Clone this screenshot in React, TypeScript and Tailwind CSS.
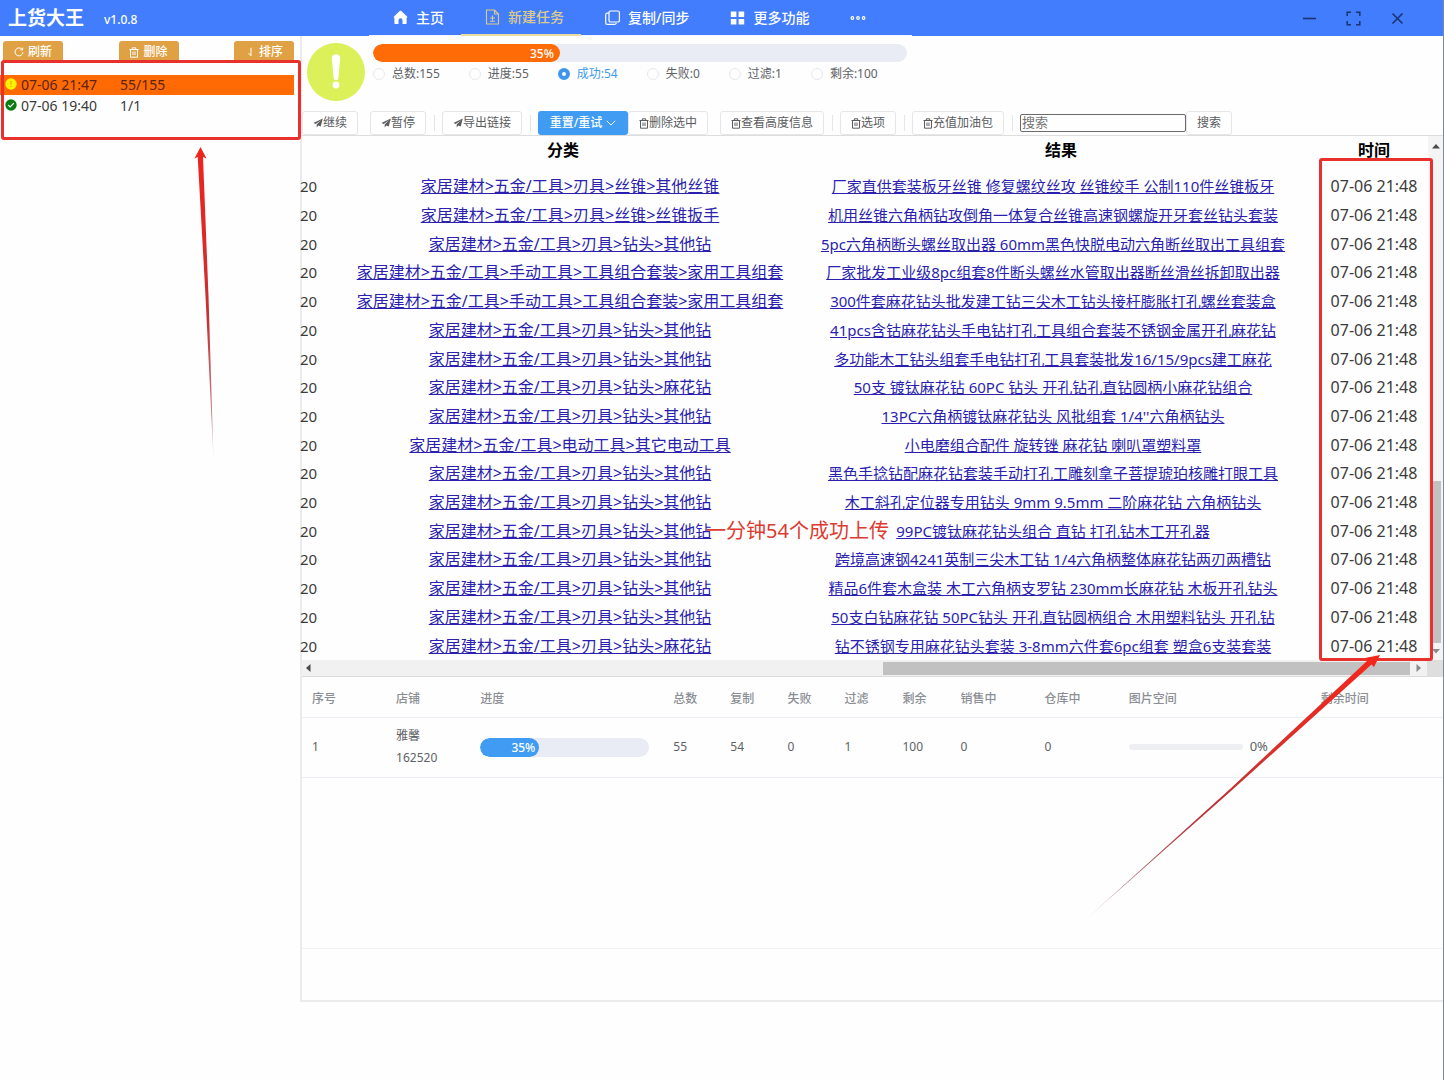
import React from "react";

const DRILL = "家居建材>五金/工具>刃具>钻头>其他钻";
const TWIST = "家居建材>五金/工具>刃具>钻头>麻花钻";
const KIT = "家居建材>五金/工具>手动工具>工具组合套装>家用工具组套";

const results: [string, string][] = [
  ["家居建材>五金/工具>刃具>丝锥>其他丝锥", "厂家直供套装板牙丝锥 修复螺纹丝攻 丝锥绞手 公制110件丝锥板牙"],
  ["家居建材>五金/工具>刃具>丝锥>丝锥扳手", "机用丝锥六角柄钻攻倒角一体复合丝锥高速钢螺旋开牙套丝钻头套装"],
  [DRILL, "5pc六角柄断头螺丝取出器 60mm黑色快脱电动六角断丝取出工具组套"],
  [KIT, "厂家批发工业级8pc组套8件断头螺丝水管取出器断丝滑丝拆卸取出器"],
  [KIT, "300件套麻花钻头批发建工钻三尖木工钻头接杆膨胀打孔螺丝套装盒"],
  [DRILL, "41pcs含钴麻花钻头手电钻打孔工具组合套装不锈钢金属开孔麻花钻"],
  [DRILL, "多功能木工钻头组套手电钻打孔工具套装批发16/15/9pcs建工麻花"],
  [TWIST, "50支 镀钛麻花钻 60PC 钻头 开孔钻孔直钻圆柄小麻花钻组合"],
  [DRILL, "13PC六角柄镀钛麻花钻头 风批组套 1/4''六角柄钻头"],
  ["家居建材>五金/工具>电动工具>其它电动工具", "小电磨组合配件 旋转锉 麻花钻 喇叭罩塑料罩"],
  [DRILL, "黑色手捻钻配麻花钻套装手动打孔工雕刻拿子菩提琥珀核雕打眼工具"],
  [DRILL, "木工斜孔定位器专用钻头 9mm 9.5mm 二阶麻花钻 六角柄钻头"],
  [DRILL, "99PC镀钛麻花钻头组合 直钻 打孔钻木工开孔器"],
  [DRILL, "跨境高速钢4241英制三尖木工钻 1/4六角柄整体麻花钻两刃两槽钻"],
  [DRILL, "精品6件套木盒装 木工六角柄支罗钻 230mm长麻花钻 木板开孔钻头"],
  [DRILL, "50支白钻麻花钻 50PC钻头 开孔直钻圆柄组合 木用塑料钻头 开孔钻"],
  [TWIST, "钻不锈钢专用麻花钻头套装 3-8mm六件套6pc组套 塑盒6支装套装"],
];

const filters = ["总数:155", "进度:55", "成功:54", "失败:0", "过滤:1", "剩余:100"];

const HomeIcon = () => (
  <svg width="15" height="15" viewBox="0 0 15 15" fill="currentColor" aria-hidden="true">
    <path d="M7.5 0.8c.3 0 .6.1.8.3L14 6.500c.6.6.300 1.300-.400 1.300V13c0 .600-.400 1-1 1H9.500V10.200a2 2 0 0 0-4 0V14H2.400c-.600 0-1-.400-1-1V7.800C.700 7.800.400 7.100 1 6.500L6.700 1.100c.2-.2.5-.3.8-.3z" />
  </svg>
);
const DocIcon = () => (
  <svg width="15" height="16" viewBox="0 0 15 16" fill="none" stroke="currentColor" strokeWidth="1.1" aria-hidden="true">
    <path d="M1.500 1h8l4 4v10h-12zM9.500 1v4h4M7.500 6.500v5M5 9h5M5 12.300h5" />
  </svg>
);
const CopyIcon = () => (
  <svg width="15" height="15" viewBox="0 0 15 15" fill="none" stroke="currentColor" strokeWidth="1.2" aria-hidden="true">
    <rect x="4" y="1" width="10.4" height="11" rx="1.6" />
    <path d="M4 3.2H2.2C1.4 3.2.7 3.9.7 4.7v8c0 .9.7 1.6 1.5 1.6h7.6c.8 0 1.5-.6 1.6-1.5" />
  </svg>
);
const GridIcon = () => (
  <svg width="15" height="14" viewBox="0 0 15 14" fill="currentColor" aria-hidden="true">
    <path d="M.8.5h5.6v5.6H.8zM8.6.5h5.6v5.6H8.6zM.8 8h5.6v5.6H.8zM8.6 8h5.6v5.6H8.6z" />
  </svg>
);
const Plane = () => (
  <svg width="10" height="10" viewBox="0 0 10 10" fill="currentColor" aria-hidden="true">
    <path d="M9.8.6.4 5l2.3 1L8.2 2 3.7 6.5v3L5.3 7.4l2.4 1.2z" />
  </svg>
);
const Trash = () => (
  <svg width="10" height="11" viewBox="0 0 10 11" fill="none" stroke="currentColor" strokeWidth="1" aria-hidden="true">
    <path d="M.5 2.5h9M3.3 2.3V.8h3.4v1.5M1.5 2.5v7.7h7V2.5M4 4.5V8M6 4.5V8" />
  </svg>
);
const Refresh = () => (
  <svg width="10" height="10" viewBox="0 0 10 10" fill="none" stroke="currentColor" strokeWidth="1" aria-hidden="true">
    <path d="M8.3 2.6A4 4 0 1 0 9 5.2M8.6.6v2.3H6.3" />
  </svg>
);
const SortDown = () => (
  <svg width="10" height="10" viewBox="0 0 10 10" fill="none" stroke="currentColor" strokeWidth="1" aria-hidden="true">
    <path d="M6 .8v8L3.4 6.2" />
  </svg>
);

function NavItem({ icon, label, active }: { icon: React.ReactNode; label: string; active?: boolean }) {
  return (
    <a
      href="#"
      className={
        active
          ? "flex items-center gap-2 border-b-2 border-[#ecdca0] pl-6 pr-[17px] text-[#dccb8c]"
          : "flex items-center gap-2 border-b border-[#f2f5fd] pl-6 pr-[17px] text-white"
      }
    >
      {icon}
      <span>{label}</span>
    </a>
  );
}

function TitleBar() {
  return (
    <header className="flex h-9 items-stretch bg-[#417dfd] text-sm font-medium text-white">
      <div className="flex w-[369px] shrink-0 items-center pl-2">
        <h1 className="text-[19px] font-bold leading-6">上货大王</h1>
        <span className="ml-5 mt-1 text-xs">v1.0.8</span>
      </div>
      <nav className="flex w-[543px] shrink-0">
        <NavItem icon={<HomeIcon />} label="主页" />
        <NavItem icon={<DocIcon />} label="新建任务" active />
        <NavItem icon={<CopyIcon />} label="复制/同步" />
        <NavItem icon={<GridIcon />} label="更多功能" />
        <button aria-label="更多" className="flex flex-1 items-center border-b border-[#f2f5fd] pl-6">
          <svg width="16" height="6" viewBox="0 0 16 6" fill="none" stroke="currentColor" strokeWidth="1.2">
            <circle cx="2.4" cy="3" r="1.3" />
            <circle cx="8" cy="3" r="1.3" />
            <circle cx="13.6" cy="3" r="1.3" />
          </svg>
        </button>
      </nav>
      <div className="ml-auto mr-[38px] flex items-center gap-[29px] text-[#1b336f]">
        <button aria-label="最小化">
          <svg width="15" height="15" viewBox="0 0 15 15" stroke="currentColor" strokeWidth="1.6">
            <path d="M1 7.5h13" />
          </svg>
        </button>
        <button aria-label="最大化">
          <svg width="15" height="15" viewBox="0 0 15 15" fill="none" stroke="currentColor" strokeWidth="1.5">
            <path d="M1.2 5V1.2H5M10 1.2h3.8V5M13.8 10v3.8H10M5 13.8H1.2V10" />
          </svg>
        </button>
        <button aria-label="关闭">
          <svg width="15" height="15" viewBox="0 0 15 15" stroke="currentColor" strokeWidth="1.6">
            <path d="M2.5 2.5l10 10M12.5 2.5l-10 10" />
          </svg>
        </button>
      </div>
    </header>
  );
}

function SideButton({ icon, label }: { icon: React.ReactNode; label: string }) {
  return (
    <button className="flex h-[22px] w-[60px] items-center justify-center gap-1 rounded-[3px] bg-[#e0a145] text-xs font-medium text-white">
      {icon}
      {label}
    </button>
  );
}

function Sidebar() {
  return (
    <aside className="relative w-[300px] shrink-0">
      <div className="flex justify-between pl-[3px] pr-1.5 pt-[5px]">
        <SideButton icon={<Refresh />} label="刷新" />
        <SideButton icon={<Trash />} label="删除" />
        <SideButton icon={<SortDown />} label="排序" />
      </div>
      <ul className="mr-1.5 mt-3 text-sm leading-5">
        <li className="flex h-5 items-center bg-[#ff6a05] pl-[5px] text-[#5a2413]">
          <svg width="12" height="12" viewBox="0 0 12 12" className="mb-0.5 mr-1" aria-hidden="true">
            <circle cx="6" cy="6" r="5.7" fill="#fff200" />
            <path d="M6 2.8v4M6 8v1.2" stroke="#e8a33a" strokeWidth="1.2" />
          </svg>
          <span className="w-[99px]">07-06 21:47</span>
          <span>55/155</span>
        </li>
        <li className="mt-px flex h-5 items-center pl-[5px] text-[#3a3a3a]">
          <svg width="12" height="12" viewBox="0 0 12 12" className="mb-0.5 mr-1" aria-hidden="true">
            <circle cx="6" cy="6" r="5.7" fill="#0b7d10" />
            <path d="M3.2 6l2 2 3.6-3.8" stroke="#fff" strokeWidth="1.2" fill="none" />
          </svg>
          <span className="w-[99px]">07-06 19:40</span>
          <span>1/1</span>
        </li>
      </ul>
      <div className="pointer-events-none absolute -right-px left-px top-6 z-20 h-20 rounded-[3px] border-[3px] border-[#e8302c]" />
      <svg width="30" height="320" viewBox="0 0 30 320" className="absolute left-[190px] top-[110px]" aria-hidden="true">
        <defs>
          <linearGradient id="fadeDown" x1="0" y1="0" x2="0" y2="1">
            <stop offset="0" stopColor="#f0241c" />
            <stop offset="0.55" stopColor="#c92f31" />
            <stop offset="0.85" stopColor="#b0666c" stopOpacity="0.8" />
            <stop offset="1" stopColor="#b08088" stopOpacity="0.1" />
          </linearGradient>
        </defs>
        <path d="M10.500 1 16.500 12.500 13 11 18.500 150 23.700 318 15.500 150 7.700 11 4.500 12.500z" fill="url(#fadeDown)" />
      </svg>
    </aside>
  );
}

function StatusHeader() {
  return (
    <section className="flex h-[75px] pl-[5px] pt-[7px]">
      <svg width="58" height="58" viewBox="0 0 58 58" className="shrink-0" aria-hidden="true">
        <circle cx="29" cy="29" r="29" fill="#dcf05a" />
        <path d="M24.800 15c0-5 8.400-5 8.400 0L31.300 35.500c-.4 2.200-4.200 2.200-4.600 0z" fill="#fff" />
        <circle cx="29" cy="42" r="3.400" fill="#fff" />
      </svg>
      <div className="ml-2 w-[534px]">
        <div className="mt-px h-[18px] overflow-hidden rounded-full bg-[#eaecf5]">
          <div className="h-full rounded-full bg-[#ff6b06] pr-1.5 text-right text-xs font-medium leading-5 text-white" style={{ width: "35%" }}>
            35%
          </div>
        </div>
        <div className="mt-1 flex gap-[29px] text-xs leading-4 text-[#606266]">
          {filters.map((f, i) => (
            <label key={f} className="flex items-center gap-[7px] whitespace-nowrap has-checked:text-[#3f9bf0]">
              <input
                type="radio"
                name="filter"
                defaultChecked={i === 2}
                className="size-3 appearance-none rounded-full border border-[#e6e8ed] bg-white checked:border-4 checked:border-[#3f95ea]"
              />
              {f}
            </label>
          ))}
        </div>
      </div>
    </section>
  );
}

function ToolButton({ icon, label }: { icon?: React.ReactNode; label: string }) {
  return (
    <button className="flex h-6 items-center whitespace-nowrap rounded-[3px] border border-[#e4e6ea] bg-white px-2.5 text-xs text-[#5a5c60]">
      {icon}
      {label}
    </button>
  );
}

const Sep = () => <span className="ml-2 mr-[7px] h-4 w-px bg-[#e4e6ea]" />;

function Toolbar() {
  return (
    <div className="flex h-[25px] items-center border-b border-[#dddddd]">
      <ToolButton icon={<Plane />} label="继续" />
      <span className="w-3" />
      <ToolButton icon={<Plane />} label="暂停" />
      <Sep />
      <ToolButton icon={<Plane />} label="导出链接" />
      <Sep />
      <button className="flex h-6 w-[90px] items-center justify-center gap-1 rounded-[3px] bg-[#409cf2] text-xs font-medium text-white">
        重置/重试
        <svg width="10" height="6" viewBox="0 0 10 6" fill="none" stroke="currentColor" strokeWidth="1" aria-hidden="true">
          <path d="M.8.8 5 5 9.200.8" />
        </svg>
      </button>
      <ToolButton icon={<Trash />} label="删除选中" />
      <span className="w-3" />
      <ToolButton icon={<Trash />} label="查看高度信息" />
      <Sep />
      <ToolButton icon={<Trash />} label="选项" />
      <Sep />
      <ToolButton icon={<Trash />} label="充值加油包" />
      <Sep />
      <input
        type="text"
        aria-label="搜索"
        placeholder="搜索"
        className="h-[18px] w-[166px] rounded-[2px] border border-[#6b6b6b] px-px text-[13px] placeholder:text-[#757575]"
      />
      <ToolButton label="搜索" />
    </div>
  );
}

const linkClass = "whitespace-nowrap text-[#2a1fae] underline";

function ResultsTable() {
  return (
    <section className="relative border-b border-[#dcdcdc]">
      <div className="flex">
        <table className="-ml-0.5 h-[524px] flex-1 table-fixed border-collapse text-center text-base leading-6 text-[#3b3b3b]">
          <thead>
            <tr className="h-9 align-top text-black">
              <th className="w-[54px]" />
              <th className="w-[432px] pr-[14px] pt-0.5 font-bold">分类</th>
              <th className="w-[534px] pl-4 pt-0.5 font-bold">结果</th>
              <th className="w-[108px] pt-0.5 font-bold">时间</th>
            </tr>
          </thead>
          <tbody>
            {results.map(([category, title]) => (
              <tr key={title}>
                <td className="p-0 text-left text-[15px]">20</td>
                <td className="p-0">
                  <a href="#" className={linkClass}>{category}</a>
                </td>
                <td className="p-0 text-[15px]">
                  <a href="#" className={linkClass}>{title}</a>
                </td>
                <td className="whitespace-nowrap p-0">07-06 21:48</td>
              </tr>
            ))}
          </tbody>
        </table>
        <div className="flex w-[15px] flex-col items-center bg-[#f4f4f4] pb-1.5 pt-2">
          <svg width="8" height="5" viewBox="0 0 8 5" fill="#4a4a4a" aria-hidden="true"><path d="M4 0l4 4.500H0z" /></svg>
          <div className="mt-auto h-[162px] w-[11px] bg-[#c1c1c1]" />
          <svg width="8" height="5" viewBox="0 0 8 5" fill="#8a8a8a" className="mt-1.5" aria-hidden="true"><path d="M4 4.500L8 0H0z" /></svg>
        </div>
      </div>
      <div className="flex h-4 items-center bg-[#f1f1f1]">
        <svg width="5" height="8" viewBox="0 0 5 8" fill="#4a4a4a" className="ml-1" aria-hidden="true"><path d="M0 4l4.500-4v8z" /></svg>
        <div className="ml-auto h-[13px] w-[527px] bg-[#c1c1c1]" />
        <svg width="5" height="8" viewBox="0 0 5 8" fill="#8a8a8a" className="mx-1.5" aria-hidden="true"><path d="M5 4L.500 0v8z" /></svg>
        <div className="h-full w-4 bg-[#dedede]" />
      </div>
      <p className="absolute left-[404px] top-[383px] whitespace-nowrap text-xl leading-6 text-[#dd3a30]">一分钟54个成功上传</p>
      <div className="pointer-events-none absolute right-2.5 top-[22px] h-[503px] w-[114px] rounded-[3px] border-[3px] border-[#e8302c]" />
      <svg width="302" height="270" viewBox="0 0 302 270" className="pointer-events-none absolute right-[60px] top-[517px] z-10" aria-hidden="true">
        <defs>
          <linearGradient id="fadeLeft" x1="1" y1="0" x2="0" y2="1">
            <stop offset="0" stopColor="#f5261b" />
            <stop offset="0.35" stopColor="#d9302a" />
            <stop offset="0.6" stopColor="#b83238" />
            <stop offset="0.85" stopColor="#b0787e" />
            <stop offset="1" stopColor="#c0a0a4" stopOpacity="0.3" />
          </linearGradient>
        </defs>
        <path d="M299 2 293 14 290.500 11.500 150 138 2 269 149 136 286.500 7.500 284 5z" fill="url(#fadeLeft)" />
      </svg>
    </section>
  );
}

const shopColumns: [string, string][] = [
  ["序号", "w-[84px]"],
  ["店铺", "w-[84px]"],
  ["进度", "w-[193px]"],
  ["总数", "w-[57px]"],
  ["复制", "w-[57px]"],
  ["失败", "w-[57px]"],
  ["过滤", "w-[58px]"],
  ["剩余", "w-[58px]"],
  ["销售中", "w-[84px]"],
  ["仓库中", "w-[84px]"],
  ["图片空间", "w-[192px]"],
  ["剩余时间", "w-[132px]"],
];

function ShopTable() {
  return (
    <section className="h-[272px] border-b border-[#f2f2f4]">
      <table className="w-full table-fixed border-collapse text-left text-xs text-[#606266]">
        <thead>
          <tr className="h-10 border-b border-[#ebeef5] text-[#8b8e94]">
            {shopColumns.map(([name, width]) => (
              <th key={name} className={`${width} px-2.5 pt-1 font-medium`}>{name}</th>
            ))}
          </tr>
        </thead>
        <tbody>
          <tr className="h-[60px] border-b border-[#ebeef5]">
            <td className="px-2.5">1</td>
            <td className="px-2.5 leading-[22px]">雅馨<br />162520</td>
            <td className="px-2.5">
              <div className="mr-1 h-[19px] overflow-hidden rounded-full bg-[#eaecf5]">
                <div className="h-full rounded-full bg-[#409cf2] pr-1 text-right font-medium leading-5 text-white" style={{ width: "35%" }}>35%</div>
              </div>
            </td>
            <td className="px-2.5">55</td>
            <td className="px-2.5">54</td>
            <td className="px-2.5">0</td>
            <td className="px-2.5">1</td>
            <td className="px-2.5">100</td>
            <td className="px-2.5">0</td>
            <td className="px-2.5">0</td>
            <td className="pl-2.5 pr-0">
              <div className="flex items-center gap-[7px]">
                <div className="h-1.5 w-[114px] rounded-full bg-[#eeeff3]" />
                <span className="text-[13px]">0%</span>
              </div>
            </td>
            <td />
          </tr>
        </tbody>
      </table>
    </section>
  );
}

export default function App() {
  return (
    <div className="min-h-screen overflow-hidden border-r border-[#7d86a3] bg-[#fefefe] font-['Noto_Sans','Noto_Sans_CJK_SC',sans-serif]">
      <TitleBar />
      <div className="flex">
        <Sidebar />
        <main className="min-w-0 flex-1 border-b-2 border-l-2 border-[#ebebeb]">
          <StatusHeader />
          <Toolbar />
          <ResultsTable />
          <ShopTable />
          <footer className="h-[51px]" />
        </main>
      </div>
    </div>
  );
}
